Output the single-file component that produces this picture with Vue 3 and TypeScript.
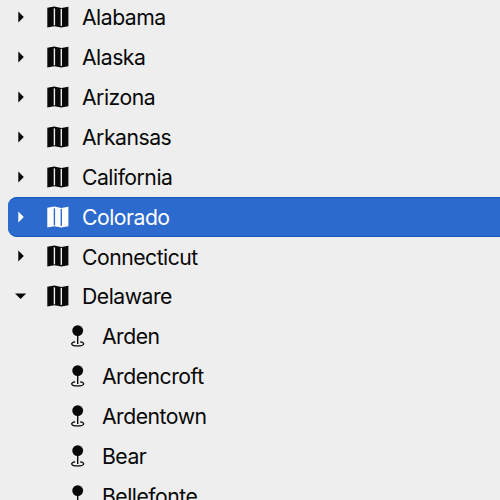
<script setup lang="ts">
interface Row { name: string; kind: 'state' | 'city'; open?: boolean; selected?: boolean }
const rows: Row[] = [
  { name: 'Alabama', kind: 'state' },
  { name: 'Alaska', kind: 'state' },
  { name: 'Arizona', kind: 'state' },
  { name: 'Arkansas', kind: 'state' },
  { name: 'California', kind: 'state' },
  { name: 'Colorado', kind: 'state', selected: true },
  { name: 'Connecticut', kind: 'state' },
  { name: 'Delaware', kind: 'state', open: true },
  { name: 'Arden', kind: 'city' },
  { name: 'Ardencroft', kind: 'city' },
  { name: 'Ardentown', kind: 'city' },
  { name: 'Bear', kind: 'city' },
  { name: 'Bellefonte', kind: 'city' },
]
</script>

<template>
  <div class="tree">
    <div v-for="r in rows" :key="r.name" class="row" :class="[r.kind, { selected: r.selected }]">
      <svg v-if="r.kind === 'state'" class="arrow" viewBox="0 0 14 14">
        <path v-if="r.open" d="M1 4.5H12.2L6.6 10Z" />
        <path v-else d="M4.3 1.5V12.5L9.8 7Z" />
      </svg>
      <svg v-if="r.kind === 'state'" class="map" viewBox="0 0 24 24">
        <path fill-rule="evenodd" d="M1.3 2.7 8.3 1.5 15.3 2.9 22.4 1.7V21.2L15.3 22.6 8.3 21.2 1.3 22.4ZM7.7 3.2V20.2L9.1 20.5V3.5ZM14.6 4V21L16 20.8V3.8Z" />
      </svg>
      <svg v-else class="pin" viewBox="0 0 16 24">
        <circle cx="7.7" cy="6.6" r="5.4" />
        <path d="M7 11H8.4V20H7Z" />
        <path class="ring" d="M5.2 17.8C2.9 18.1 1.7 18.8 1.7 19.7C1.7 21 4.3 21.9 7.7 21.9S13.7 21 13.7 19.7C13.7 18.8 12.5 18.1 10.2 17.8" />
      </svg>
      <span class="label">{{ r.name }}</span>
    </div>
  </div>
</template>

<style>
body { margin: 0; background: #eee; }
</style>
<style scoped>
.tree { height: 500px; overflow: hidden; background: #eee; color: #080808; font: 21.2px/40px Inter, sans-serif; letter-spacing: -0.5px; }
.row { height: 39.86px; display: flex; align-items: center; margin-left: 8px; }
.row:first-child { margin-top: -2.6px; }
.selected { background: #2d6acd; color: #fff; border-radius: 9px 0 0 9px; box-shadow: inset 0 1px #1558c1, inset 0 -1px #1558c1; }
svg { fill: currentColor; flex: none; }
.arrow { width: 14px; height: 14px; margin-left: 6px; margin-right: 18px; }
.map { width: 24px; height: 24px; margin-right: 12px; }
.pin { width: 16px; height: 24px; margin-left: 62px; margin-right: 16px; }
.pin .ring { fill: none; stroke: currentColor; stroke-width: 1.3; }
</style>
